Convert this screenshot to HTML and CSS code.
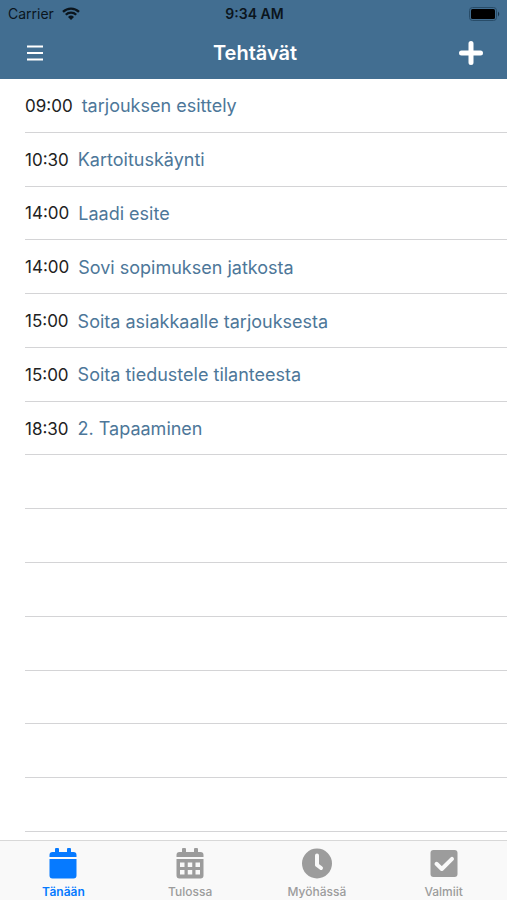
FILE: index.html
```html
<!DOCTYPE html>
<html lang="fi">
<head>
<meta charset="utf-8">
<meta name="viewport" content="width=device-width, initial-scale=1">
<title>Tehtävät</title>
<link rel="stylesheet" href="styles.css">
</head>
<body>
<header class="header">
  <div class="status">
    <span class="carrier">Carrier
      <svg class="wifi" viewBox="0 0 18 13" aria-hidden="true"><path d="M1 4.800a11.500 11.500 0 0 1 16 0M3.800 7.800a7.400 7.400 0 0 1 10.400 0" fill="none" stroke="currentColor" stroke-width="2.300"/><path d="M6 9.900a4.300 4.300 0 0 1 6 0L9 13z" fill="currentColor"/></svg>
    </span>
    <span class="clock">9:34 AM</span>
    <svg class="battery" viewBox="0 0 32 14" aria-hidden="true"><rect x=".5" y=".5" width="27" height="13" rx="3" fill="none" stroke="#284c68"/><rect x="2" y="2" width="24" height="10" rx="1.500" fill="#000"/><path d="M29 4.500q2.500 2.500 0 5z" fill="#17334a"/></svg>
  </div>
  <div class="navbar">
    <button class="nav-button" type="button" aria-label="Valikko">
      <svg class="menu-icon" viewBox="0 0 16 16" aria-hidden="true"><path d="M0 1.500h16M0 8h16M0 14.500h16" stroke="currentColor" stroke-width="2.200"/></svg>
    </button>
    <h1 class="title">Tehtävät</h1>
    <button class="nav-button add" type="button" aria-label="Lisää tehtävä">
      <svg class="plus-icon" viewBox="0 0 24 24" aria-hidden="true"><path d="M12 2.500v19M2.500 12h19" stroke="currentColor" stroke-width="5" stroke-linecap="round"/></svg>
    </button>
  </div>
</header>
<main class="tasks">
  <ul class="list">
    <li class="row"><time class="time">09:00</time><a class="task" href="#">tarjouksen esittely</a></li>
    <li class="row"><time class="time">10:30</time><a class="task" href="#">Kartoituskäynti</a></li>
    <li class="row"><time class="time">14:00</time><a class="task" href="#">Laadi esite</a></li>
    <li class="row"><time class="time">14:00</time><a class="task" href="#">Sovi sopimuksen jatkosta</a></li>
    <li class="row"><time class="time">15:00</time><a class="task" href="#">Soita asiakkaalle tarjouksesta</a></li>
    <li class="row"><time class="time">15:00</time><a class="task" href="#">Soita tiedustele tilanteesta</a></li>
    <li class="row"><time class="time">18:30</time><a class="task" href="#">2. Tapaaminen</a></li>
    <li class="row"></li>
    <li class="row"></li>
    <li class="row"></li>
    <li class="row"></li>
    <li class="row"></li>
    <li class="row"></li>
    <li class="row"></li>
  </ul>
</main>
<nav class="tabs">
  <a class="tab active" href="#" aria-current="page">
    <svg class="tab-icon" viewBox="0 0 32 32" aria-hidden="true"><path d="M2.500 10V8a3 3 0 0 1 3-3H8V2a1 1 0 0 1 1-1h2a1 1 0 0 1 1 1v3h8V2a1 1 0 0 1 1-1h2a1 1 0 0 1 1 1v3h2.500a3 3 0 0 1 3 3v2zM2.500 12h27v16.500a3 3 0 0 1-3 3h-21a3 3 0 0 1-3-3z" fill="currentColor"/></svg>
    <span>Tänään</span>
  </a>
  <a class="tab" href="#">
    <svg class="tab-icon" viewBox="0 0 32 32" aria-hidden="true"><path fill-rule="evenodd" d="M2.500 10V8a3 3 0 0 1 3-3H8V2a1 1 0 0 1 1-1h2a1 1 0 0 1 1 1v3h8V2a1 1 0 0 1 1-1h2a1 1 0 0 1 1 1v3h2.500a3 3 0 0 1 3 3v2zM2.500 12h27v16.500a3 3 0 0 1-3 3h-21a3 3 0 0 1-3-3zM6 15.500v4.500h4.500v-4.500zM13.750 15.500v4.500h4.500v-4.500zM21.500 15.500v4.500h4.500v-4.500zM6 23v4.500h4.500v-4.500zM13.750 23v4.500h4.500v-4.500zM21.500 23v4.500h4.500v-4.500z" fill="currentColor"/></svg>
    <span>Tulossa</span>
  </a>
  <a class="tab" href="#">
    <svg class="tab-icon" viewBox="0 0 32 32" aria-hidden="true"><circle cx="16" cy="16.500" r="15" fill="currentColor"/><path d="M16 8.500v9.500l4 3" fill="none" stroke="#f9f9f9" stroke-width="4" stroke-linecap="round" stroke-linejoin="round"/></svg>
    <span>Myöhässä</span>
  </a>
  <a class="tab" href="#">
    <svg class="tab-icon" viewBox="0 0 32 32" aria-hidden="true"><rect x="2.500" y="3" width="27" height="27" rx="3" fill="currentColor"/><path d="M8.500 16.800l5.300 5.200L24 11.800" fill="none" stroke="#f9f9f9" stroke-width="4" stroke-linecap="round" stroke-linejoin="round"/></svg>
    <span>Valmiit</span>
  </a>
</nav>
</body>
</html>
```
FILE: styles.css
```css
* {
  box-sizing: border-box;
}

body {
  display: flex;
  flex-direction: column;
  min-height: 100vh;
  margin: 0;
  background: #fff;
  font-family: Inter, "Liberation Sans", sans-serif;
}

.header {
  background: #426e91;
}

.status {
  display: grid;
  grid-template-columns: 1fr auto 1fr;
  align-items: center;
  height: 27px;
  padding: 0 6px 0 8px;
  color: #0b151d;
  font-size: 14px;
}

.carrier {
  display: flex;
  align-items: center;
  gap: 8px;
}

.wifi {
  width: 18px;
  height: 13px;
}

.clock {
  font-weight: 600;
}

.battery {
  justify-self: end;
  width: 32px;
  height: 14px;
}

.navbar {
  display: grid;
  grid-template-columns: 1fr auto 1fr;
  align-items: center;
  height: 52px;
  padding: 0 24px 0 27px;
  color: #fff;
}

.nav-button {
  display: flex;
  align-items: center;
  justify-self: start;
  height: 44px;
  padding: 0;
  border: 0;
  background: none;
  color: inherit;
}

.add {
  justify-self: end;
}

.menu-icon {
  width: 16px;
  height: 16px;
}

.plus-icon {
  width: 24px;
  height: 24px;
}

.title {
  margin: 0;
  font-size: 20px;
  font-weight: 600;
}

.tasks {
  display: flex;
  flex: 1;
  padding: 0 0 8px 25px;
}

.list {
  display: grid;
  flex: 1;
  grid-auto-rows: minmax(44px, 1fr);
  margin: 0;
  padding: 0;
  list-style: none;
}

.row {
  display: flex;
  align-items: center;
  gap: 9px;
  padding-top: 1px;
  border-bottom: 1px solid #d4d4d6;
}

.time {
  color: #222;
  font-size: 17px;
}

.task {
  color: #4d7799;
  font-size: 18px;
  text-decoration: none;
}

.tabs {
  display: grid;
  grid-template-columns: repeat(4, 1fr);
  height: 60px;
  border-top: 1px solid #d8d8d8;
  background: #f9f9f9;
}

.tab {
  display: flex;
  flex-direction: column;
  align-items: center;
  gap: 5px;
  padding-top: 6px;
  color: #9c9c9c;
  font-size: 12px;
  font-weight: 500;
  line-height: 16px;
  text-decoration: none;
}

.tab-icon {
  width: 32px;
  height: 32px;
}

.active {
  color: #067aff;
  font-weight: 600;
}
```
